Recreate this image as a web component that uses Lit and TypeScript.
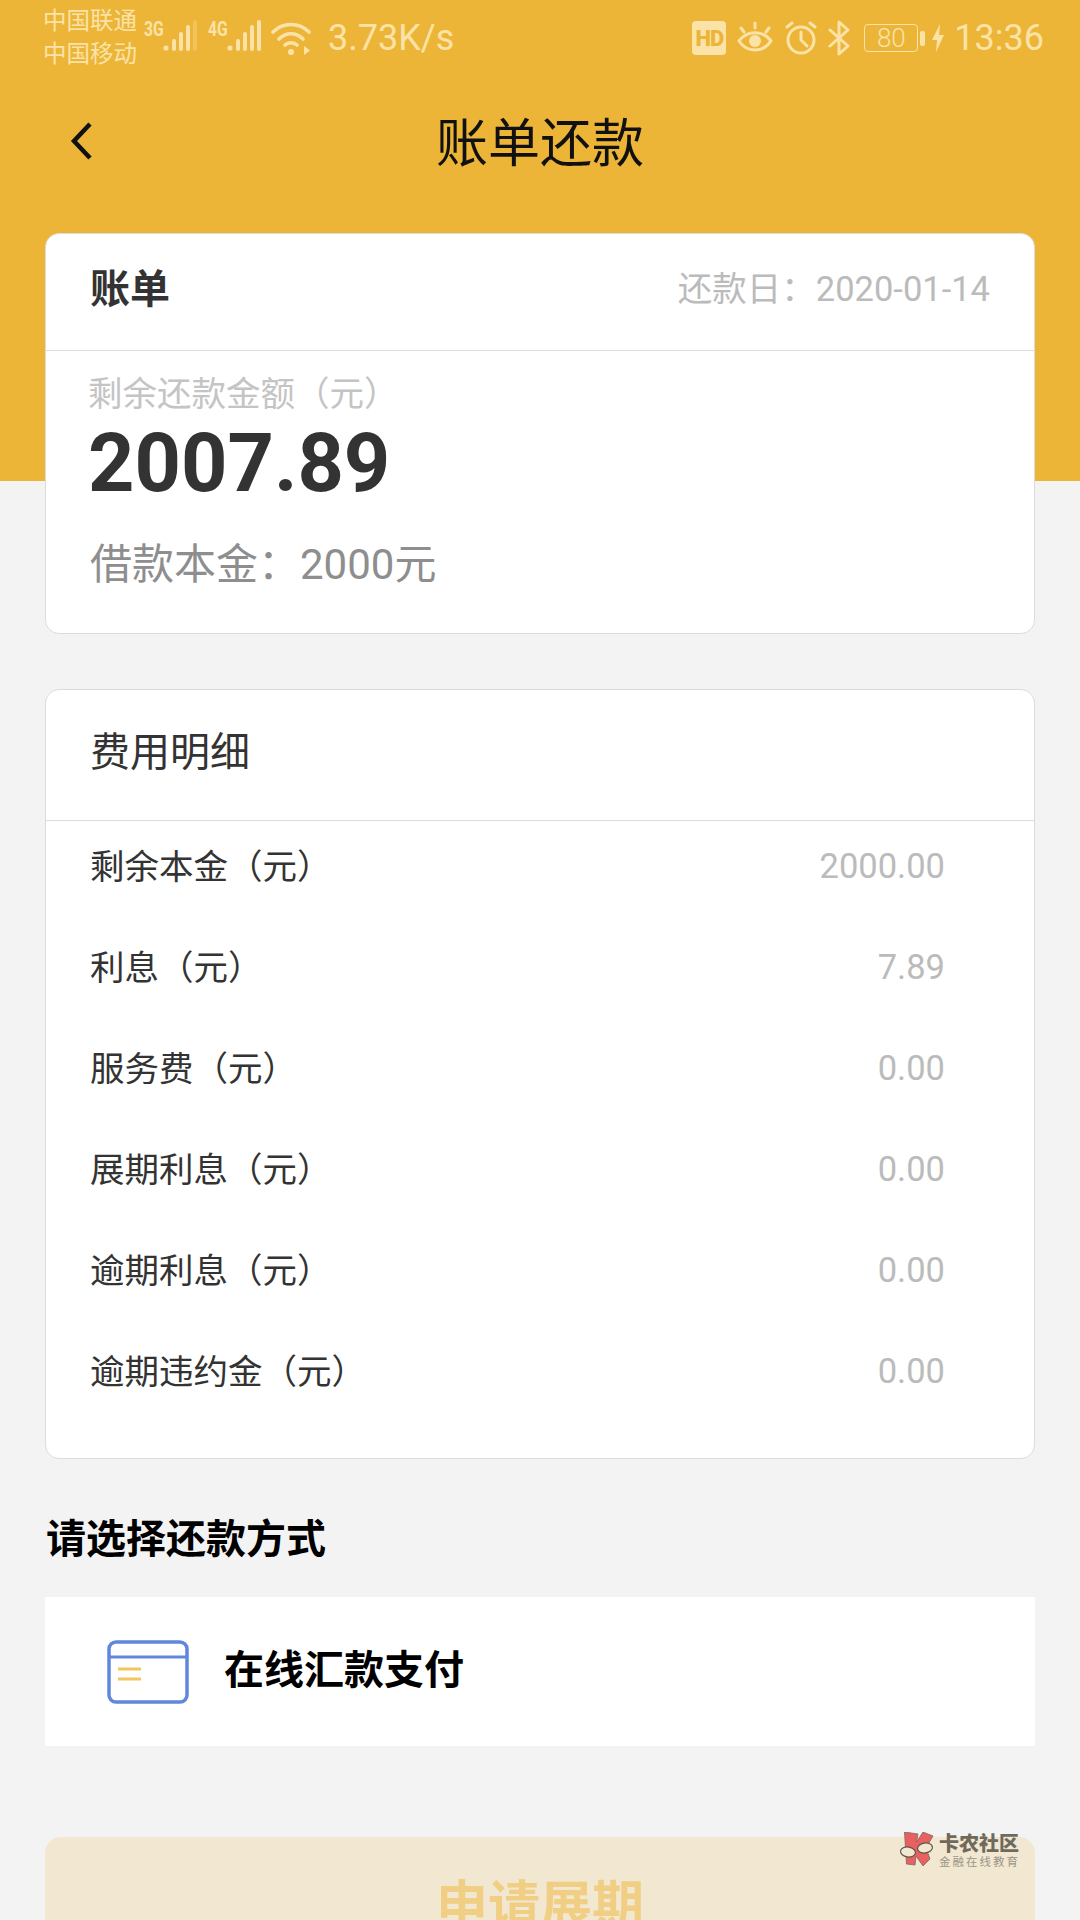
import { LitElement, css, html, svg } from "lit";
import { customElement } from "lit/decorators.js";

type FeeRow = { label: string; value: string };

const FEES: FeeRow[] = [
	{ label: "剩余本金（元）", value: "2000.00" },
	{ label: "利息（元）", value: "7.89" },
	{ label: "服务费（元）", value: "0.00" },
	{ label: "展期利息（元）", value: "0.00" },
	{ label: "逾期利息（元）", value: "0.00" },
	{ label: "逾期违约金（元）", value: "0.00" },
];

const signal = (faded: boolean) => svg`
	<svg class="signal" width="34" height="34" viewBox="0 0 34 34">
		<circle cx="3" cy="29" r="2.6" fill="currentColor"/>
		<rect x="9" y="20" width="4" height="12" rx="2" fill="currentColor"/>
		<rect x="16" y="13" width="4" height="19" rx="2" fill="currentColor"/>
		<rect x="23" y="6" width="4" height="26" rx="2" fill="currentColor"/>
		<rect x="30" y="1" width="4" height="31" rx="2" fill="currentColor" opacity="${faded ? 0.3 : 1}"/>
	</svg>`;

@customElement("app-root")
export class AppRoot extends LitElement {
	static get styles() {
		return css`
			:host {
				display: block;
				width: 1080px;
				height: 1920px;
				overflow: hidden;
				position: relative;
				background: linear-gradient(#ecb537 481px, #f3f3f3 481px);
				font-family: Roboto, "Noto Sans CJK SC", sans-serif;
			}
			.status {
				height: 91px;
				box-sizing: border-box;
				padding: 0 36px 15px 43px;
				display: flex;
				align-items: center;
				color: #fbe3a8;
			}
			.carriers {
				font-size: 23.5px;
				line-height: 33px;
				width: 101px;
			}
			.net {
				display: flex;
				align-items: flex-start;
				height: 38px;
			}
			.net small {
				font-size: 20px;
				font-weight: 700;
				line-height: 20px;
				width: 20px;
				transform: scaleX(0.78);
				transform-origin: left;
			}
			.signal {
				display: block;
				margin-left: -1px;
				margin-right: 11px;
			}
			.net + .net .signal {
				margin-right: 10px;
			}
			.speed {
				font-size: 36px;
				margin-left: 17px;
			}
			.status-right {
				margin-left: auto;
				display: flex;
				align-items: center;
			}
			.hd {
				width: 34px;
				height: 34px;
				border-radius: 4px;
				background: #fbe3a8;
				color: #ecb537;
				font-size: 22px;
				font-weight: 900;
				display: flex;
				align-items: center;
				justify-content: center;
				letter-spacing: -1px;
			}
			.status-right svg {
				display: block;
			}
			.eye {
				margin-left: 11px;
			}
			.alarm {
				margin-left: 12px;
			}
			.bt {
				margin-left: 11px;
			}
			.battery {
				margin-left: 14px;
				width: 54px;
				height: 28px;
				box-sizing: border-box;
				border: 1.5px solid #fbe3a8;
				border-radius: 4px;
				font-size: 26px;
				font-weight: 300;
				display: flex;
				align-items: center;
				justify-content: center;
			}
			.nub {
				width: 5px;
				height: 15px;
				border-radius: 2px;
				background: #fbe3a8;
				margin-left: 2px;
			}
			.bolt {
				margin-left: 7px;
			}
			.time {
				font-size: 36px;
				margin-left: 10px;
			}
			.nav {
				height: 100px;
				display: grid;
				grid-template-columns: 1fr auto 1fr;
				align-items: center;
			}
			.back {
				margin-left: 68px;
				display: block;
			}
			.nav h1 {
				margin: 0 0 4px;
				font-size: 52px;
				font-weight: 400;
				color: #111;
			}
			.content {
				margin: 42px 45px 0;
			}
			.card {
				background: #fff;
				border: 1px solid #dcdcdc;
				border-radius: 14px;
				box-sizing: border-box;
			}
			.bill {
				height: 401px;
			}
			.bill-head {
				height: 117px;
				box-sizing: border-box;
				padding: 0 44px 12px;
				border-bottom: 1px solid #dcdcdc;
				display: flex;
				align-items: center;
				justify-content: space-between;
			}
			.bill-head b {
				font-size: 40px;
				font-weight: 700;
				color: #333;
			}
			.bill-head span {
				font-size: 34.5px;
				color: #bbb;
			}
			.bill-body {
				padding: 21px 42px 0;
			}
			.remain {
				font-size: 34.5px;
				line-height: 44px;
				color: #c4c4c4;
			}
			.amount {
				font-size: 81px;
				font-weight: 700;
				line-height: 84px;
				margin-top: 6px;
				color: #333;
			}
			.principal {
				font-size: 42px;
				line-height: 60px;
				margin-top: 29px;
				margin-left: 2px;
				color: #8e8e8e;
			}
			.fees {
				height: 770px;
				margin-top: 55px;
			}
			.fees-head {
				height: 131px;
				box-sizing: border-box;
				padding: 0 44px 12px;
				border-bottom: 1px solid #dcdcdc;
				display: flex;
				align-items: center;
				font-size: 40px;
				color: #333;
			}
			.fee-list {
				padding: 15px 89px 0 44px;
				display: flex;
				flex-direction: column;
				gap: 41px;
			}
			.fee {
				height: 60px;
				display: flex;
				align-items: center;
				justify-content: space-between;
				font-size: 34.5px;
				color: #333;
			}
			.fee span:first-child {
				padding-bottom: 5px;
			}
			.fee span:last-child {
				color: #bbb;
			}
			h2 {
				margin: 51px 0 0 1px;
				font-size: 40px;
				line-height: 60px;
				font-weight: 700;
				color: #000;
			}
			.method {
				margin-top: 27px;
				height: 149px;
				background: #fff;
				display: flex;
				align-items: center;
				padding-left: 62px;
				gap: 35px;
				font-size: 40px;
				font-weight: 700;
				color: #000;
			}
			.method svg {
				display: block;
			}
			.method span {
				padding-bottom: 10px;
			}
			.apply {
				margin-top: 91px;
				height: 128px;
				border-radius: 16px;
				background: #f2e7d0;
				color: #f0cf85;
				font-size: 52px;
				font-weight: 700;
				display: flex;
				align-items: center;
				justify-content: center;
			}
			.mark {
				position: absolute;
				left: 900px;
				top: 1832px;
				display: flex;
				gap: 5px;
				color: #6f6a5e;
			}
			.mark svg {
				display: block;
			}
			.mark b {
				display: block;
				font-size: 20px;
				line-height: 22px;
				font-weight: 900;
				margin-top: 1px;
			}
			.mark i {
				display: block;
				font-style: normal;
				font-size: 11.5px;
				line-height: 14px;
				letter-spacing: 2px;
				color: #9a9588;
			}
		`;
	}

	renderStatus() {
		return html`
			<div class="status">
				<div class="carriers">中国联通<br />中国移动</div>
				<div class="net"><small>3G</small>${signal(true)}</div>
				<div class="net"><small>4G</small>${signal(false)}</div>
				<svg width="40" height="38" viewBox="0 0 40 38" fill="none" stroke="currentColor" stroke-width="3.6" stroke-linecap="round">
					<path d="M2 13 C12 3 28 3 38 13" />
					<path d="M8 20 C15 13 25 13 32 20" />
					<path d="M14 26 C17 23 23 23 26 26" />
					<circle cx="20" cy="33" r="3" fill="currentColor" stroke="none" />
					<path d="M33 27v9l6-4.500z" fill="currentColor" stroke="none" />
				</svg>
				<div class="speed">3.73K/s</div>
				<div class="status-right">
					<div class="hd">HD</div>
					<svg class="eye" width="36" height="34" viewBox="0 0 36 34" fill="none" stroke="currentColor" stroke-width="3" stroke-linecap="round">
						<path d="M2 20 C10 9 26 9 34 20 C26 32 10 32 2 20z" />
						<circle cx="18" cy="20" r="6" fill="currentColor" stroke="none" />
						<path d="M18 2v5M4 7l3 4M32 7l-3 4" />
					</svg>
					<svg class="alarm" width="32" height="34" viewBox="0 0 32 34" fill="none" stroke="currentColor" stroke-width="3" stroke-linecap="round">
						<circle cx="16" cy="19" r="13" />
						<path d="M16 11v8l6 6M2 6l5-4M30 6l-5-4" />
					</svg>
					<svg class="bt" width="22" height="36" viewBox="0 0 22 36" fill="none" stroke="currentColor" stroke-width="3" stroke-linejoin="round" stroke-linecap="round">
						<path d="M2 10l18 16-9 8V2l9 8L2 26" />
					</svg>
					<div class="battery">80</div>
					<div class="nub"></div>
					<svg class="bolt" width="12" height="28" viewBox="0 0 12 28">
						<path d="M8 0L0 16h5l-1 12 8-17H7z" fill="currentColor" />
					</svg>
					<div class="time">13:36</div>
				</div>
			</div>
		`;
	}

	renderMark() {
		return html`
			<div class="mark">
				<svg width="34" height="36" viewBox="0 0 34 36">
					<path d="M4.500 0L18 2l-1.500 8L23 0l10 4-7 12 4 11-7 7-7-10-1 9-8.500-1z" fill="#e8605f" stroke="#7c6a5e" stroke-width="0.8" />
					<g fill="#f2e7d0" stroke="#5f574c" stroke-width="1.2">
						<ellipse cx="8" cy="20" rx="7.500" ry="5" transform="rotate(8 8 20)" />
						<ellipse cx="25" cy="16" rx="7.500" ry="5" transform="rotate(-8 25 16)" />
					</g>
				</svg>
				<div>
					<b>卡农社区</b>
					<i>金融在线教育</i>
				</div>
			</div>
		`;
	}

	render() {
		return html`
			${this.renderStatus()}
			<div class="nav">
				<svg class="back" width="28" height="40" viewBox="0 0 28 40" fill="none" stroke="#111" stroke-width="4.500">
					<path d="M22 3L6 20l16 17" />
				</svg>
				<h1>账单还款</h1>
			</div>
			<div class="content">
				<section class="card bill">
					<div class="bill-head">
						<b>账单</b>
						<span>还款日：2020-01-14</span>
					</div>
					<div class="bill-body">
						<div class="remain">剩余还款金额（元）</div>
						<div class="amount">2007.89</div>
						<div class="principal">借款本金：2000元</div>
					</div>
				</section>
				<section class="card fees">
					<div class="fees-head">费用明细</div>
					<div class="fee-list">
						${FEES.map(
							(f) => html`<div class="fee"><span>${f.label}</span><span>${f.value}</span></div>`
						)}
					</div>
				</section>
				<h2>请选择还款方式</h2>
				<div class="method">
					<svg width="82" height="64" viewBox="0 0 82 64" fill="none">
						<rect x="2" y="2" width="78" height="60" rx="7" stroke="#5f87dc" stroke-width="3.500" />
						<path d="M2 17h78" stroke="#5f87dc" stroke-width="3" />
						<path d="M11 29h23M11 39h23" stroke="#f3c65f" stroke-width="3" />
					</svg>
					<span>在线汇款支付</span>
				</div>
				<div class="apply">申请展期</div>
			</div>
			${this.renderMark()}
		`;
	}
}
